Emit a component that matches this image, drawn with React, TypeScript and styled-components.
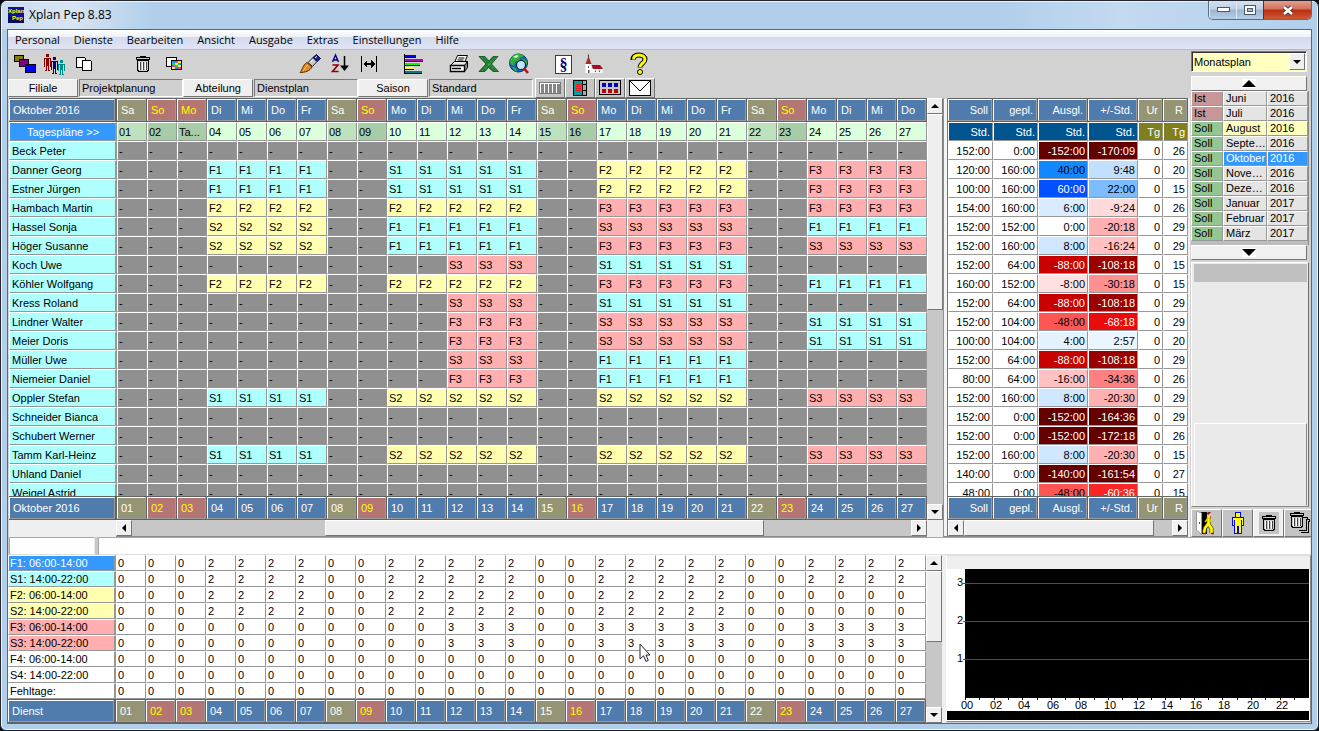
import React from "react";
import styled, { createGlobalStyle, css } from "styled-components";

const GlobalStyle = createGlobalStyle`
  * { box-sizing: border-box; }
  html, body { margin: 0; padding: 0; }
  body { background: #0b0d12; font: 11px/16px "Liberation Sans", Arial, sans-serif; color: #000; }
  button, input, select { font: inherit; color: inherit; margin: 0; border-radius: 0; }
  table { border-collapse: separate; border-spacing: 0; }
`;

const sunken = css`
  border: 1px solid;
  border-color: #7a7a7a #fff #fff #7a7a7a;
`;
const raised = css`
  border: 1px solid;
  border-color: #fff #757575 #757575 #fff;
`;

/* ---------- window ---------- */

const WindowFrame = styled.div`
  height: 100vh;
  min-height: 560px;
  display: flex;
  flex-direction: column;
  padding: 0 6px 6px;
  border: 1px solid #23242c;
  border-radius: 7px 7px 6px 6px;
  background: #b1cfeb;
  box-shadow: inset 0 0 0 1px #eef5fc;
  overflow: hidden;
`;
const TitleBar = styled.header`
  flex: none;
  height: 28px;
  display: flex;
  align-items: flex-start;
  margin: 0 -5px;
  padding: 0 5px 0 6px;
  border-top: 1px solid #eef5fc;
  background: linear-gradient(90deg, #cbdcee 0, #d8e4f2 70px, #b1cfeb 150px, #b1cfeb 1000px, #c3daf0 1120px, #b1cfeb 100%);
`;
const AppTitle = styled.h1`
  margin: 5px auto 0 5px;
  font: 12px/16px "Open Sans", sans-serif;
`;
const AppIcon = styled.svg`
  margin-top: 5px;
`;
const CaptionGroup = styled.div`
  display: flex;
  height: 19px;
  margin-top: -1px;
  border: 1px solid #5d6b7c;
  border-top: 0;
  border-radius: 0 0 5px 5px;
  overflow: hidden;
`;
const CaptionButton = styled.button<{ $close?: boolean }>`
  width: ${(p) => (p.$close ? 48 : 27)}px;
  padding: 0;
  display: flex;
  align-items: center;
  justify-content: center;
  border: 0;
  border-left: ${(p) => (p.$close ? "1px solid #5d2a2a" : "1px solid #dbe8f5")};
  background: ${(p) =>
    p.$close
      ? "linear-gradient(#e5a08f 0, #d2705a 45%, #bc2c12 50%, #cc5a35 100%)"
      : "linear-gradient(#d3e2f2 0, #bdd0e4 45%, #9db6cf 50%, #b5cfe8 100%)"};
`;
const Client = styled.div`
  flex: 1;
  min-height: 0;
  display: flex;
  flex-direction: column;
  border: 1px solid #5f6670;
  background: #d2d2d2;
  overflow: hidden;
`;
const MenuBar = styled.nav`
  flex: none;
  height: 20px;
  display: flex;
  border-bottom: 1px solid #b4bace;
  background: linear-gradient(#fff 0, #eef1f8 35%, #d4daec 38%, #e0e5f5 100%);
`;
const MenuItem = styled.button`
  height: 19px;
  padding: 0 7px;
  border: 0;
  background: none;
  font: 11px/19px "Open Sans", sans-serif;
`;

/* ---------- layout ---------- */

const Workspace = styled.div`
  flex: 1;
  min-height: 0;
  display: flex;
`;
const Planning = styled.main`
  flex: 1;
  min-width: 0;
  display: flex;
  flex-direction: column;
`;
const Toolbar = styled.div`
  flex: none;
  height: 28px;
  display: flex;
  padding-left: 2px;
`;
const ToolGroup = styled.div<{ $gap: number }>`
  display: flex;
  margin-left: ${(p) => p.$gap}px;
`;
const ToolButton = styled.button`
  width: 30px;
  height: 28px;
  padding: 0;
  border: 0;
  background: none;
  display: flex;
  align-items: center;
  justify-content: center;
`;
const SelectorRow = styled.div`
  flex: none;
  height: 20px;
  display: flex;
`;
const SelectorButton = styled.button`
  ${raised}
  width: 70px;
  padding: 0;
  margin-top: 1px;
  height: 18px;
  line-height: 16px;
  background: #efefef;
`;
const SelectorField = styled.input`
  ${sunken}
  width: 104px;
  height: 18px;
  margin: 1px 0 0 1px;
  padding: 0 2px;
  background: #d0d0d0;
`;
const ViewGroup = styled.div`
  display: flex;
  margin-left: 2px;
`;
const ViewButton = styled.button`
  ${raised}
  width: 30px;
  height: 20px;
  padding: 0;
  background: #c6c6c6;
  display: flex;
  align-items: center;
  justify-content: center;
`;
const Tables = styled.div`
  flex: 1;
  min-height: 0;
  display: flex;
`;
const Pane = styled.section<{ $width?: number; $left?: number }>`
  flex: ${(p) => (p.$width ? "none" : "1")};
  width: ${(p) => (p.$width ? `${p.$width}px` : "auto")};
  min-width: 0;
  display: flex;
  flex-direction: column;
  padding-left: ${(p) => p.$left ?? 0}px;
`;
const PaneBody = styled.div`
  flex: 1;
  min-height: 0;
  display: flex;
`;
const Clip = styled.div`
  flex: 1;
  min-width: 0;
  overflow: hidden;
  background: #efefef;
`;
const Splitter = styled.div`
  flex: none;
  width: 5px;
  border: 1px solid;
  border-color: #d2d2d2 #757575 #8a8a8a #8f8f8f;
  background: #f4f4f4;
`;
const Gutter = styled.div<{ $width: number }>`
  flex: none;
  width: ${(p) => p.$width}px;
  background: #efefef;
`;

/* ---------- scroll bars ---------- */

const BarV = styled.div`
  flex: none;
  width: 16px;
  display: flex;
  flex-direction: column;
  background: #c7c7c7;
`;
const BarH = styled.div`
  flex: 1;
  height: 17px;
  display: flex;
  background: #c7c7c7;
  border-bottom: 1px solid #8a8a8a;
`;
const BarRow = styled.div`
  flex: none;
  display: flex;
  background: #efefef;
`;
const BarButton = styled.button`
  ${raised}
  flex: none;
  width: 16px;
  height: 16px;
  padding: 0;
  background: #f0f0f0;
  display: flex;
  align-items: center;
  justify-content: center;
`;
const Track = styled.div<{ $grow: number }>`
  flex: ${(p) => p.$grow} 1 0;
`;
const Thumb = styled.div<{ $grow: number }>`
  ${raised}
  flex: ${(p) => p.$grow} 1 0;
  background: #efefef;
`;

/* ---------- tables ---------- */

const DataTable = styled.table`
  width: 100%;
  table-layout: fixed;
  line-height: 16px;
  white-space: nowrap;
  thead, tfoot { position: sticky; }
  thead { top: 0; }
  tfoot { bottom: 0; }
`;
const HeadCell = styled.th<{ $wide?: boolean }>`
  height: 24px;
  padding: 1px ${(p) => (p.$wide ? 2 : 1)}px 1px 0;
  background: #636363;
  font-weight: normal;
`;
type Tone = "work" | "sat" | "sun";
const headTone = { work: "#507bad", sat: "#959575", sun: "#b47575" };
const HeadFace = styled.div<{ $tone: Tone; $right?: boolean }>`
  height: 22px;
  padding: 0 3px;
  border: 1px solid;
  border-color: #fff #9a9a9a #9a9a9a #fff;
  background: ${(p) => headTone[p.$tone]};
  color: ${(p) => (p.$tone === "sun" ? "#ff0" : "#fff")};
  line-height: 20px;
  text-align: ${(p) => (p.$right ? "right" : "left")};
`;
const cellBox = css`
  height: 19px;
  padding: 0 1px;
  border: 1px solid;
  border-color: #fff #979797 #979797 #fff;
  overflow: hidden;
  text-align: left;
  font-weight: normal;
`;
const NameCell = styled.th<{ $lead?: boolean }>`
  ${cellBox}
  padding-left: 2px;
  border-right-width: 2px;
  background: ${(p) => (p.$lead ? "#3399ff" : "#afffff")};
  color: ${(p) => (p.$lead ? "#fff" : "#000")};
  text-align: ${(p) => (p.$lead ? "center" : "left")};
`;
const DayCell = styled.td<{ $bg: string }>`
  ${cellBox}
  background: ${(p) => p.$bg};
`;
const SumCell = styled.td<{ $bg?: string; $light?: boolean }>`
  ${cellBox}
  padding-right: 2px;
  background: ${(p) => p.$bg ?? "#fff"};
  color: ${(p) => (p.$light ? "#fff" : "#000")};
  text-align: right;
`;
const CountName = styled.th<{ $bg: string; $light?: boolean }>`
  ${cellBox}
  height: 16px;
  line-height: 14px;
  border-right-width: 2px;
  background: ${(p) => p.$bg};
  color: ${(p) => (p.$light ? "#fff" : "#000")};
`;
const CountCell = styled.td`
  ${cellBox}
  height: 16px;
  line-height: 14px;
  background: #fff;
`;

/* ---------- sidebar ---------- */

const Sidebar = styled.aside`
  flex: none;
  width: 121px;
  display: flex;
  flex-direction: column;
  padding: 1px 0 0 1px;
`;
const PlanSelect = styled.div`
  ${sunken}
  position: relative;
  height: 21px;
  margin: 0 4px 4px 0;
  box-shadow: inset 1px 1px 0 #333;
  background: #ffffc0;
  select {
    width: 100%;
    height: 19px;
    padding: 0 2px;
    border: 0;
    appearance: none;
    background: none;
  }
`;
const SelectArrow = styled.span`
  ${raised}
  position: absolute;
  top: 1px;
  right: 1px;
  width: 16px;
  height: 17px;
  background: #efefef;
  display: flex;
  align-items: center;
  justify-content: center;
  pointer-events: none;
`;
const StepButton = styled.button`
  ${raised}
  flex: none;
  height: 15px;
  margin-right: 4px;
  padding: 0;
  background: #f0f0f0;
  display: flex;
  align-items: center;
  justify-content: center;
  svg { background: #fff; }
`;
const MonthList = styled.div`
  flex: none;
  height: 154px;
  margin-right: 2px;
  overflow: hidden;
  border-right: 1px solid #8a8a8a;
  background: #bdbdbd;
`;
const MonthTable = styled.table`
  width: 100%;
  table-layout: fixed;
  white-space: nowrap;
  line-height: 13px;
`;
const MonthCell = styled.td<{ $bg: string; $light?: boolean }>`
  height: 15px;
  padding: 0 0 0 2px;
  border: 1px solid;
  border-color: #fff #979797 #979797 #fff;
  background: ${(p) => p.$bg};
  color: ${(p) => (p.$light ? "#fff" : "#000")};
  overflow: hidden;
  text-overflow: ellipsis;
`;
const InfoPanel = styled.div`
  flex: 1;
  min-height: 0;
  margin: 2px 2px 2px 0;
  padding: 1px 1px 0 2px;
  display: flex;
  flex-direction: column;
  border: 1px solid;
  border-color: #fff #6e6e6e #8a8a8a #fff;
  background: #eaeaea;
`;
const InfoHeader = styled.div`
  flex: none;
  height: 18px;
  background: #c0c0c0;
`;
const InfoUpper = styled.div`
  flex: 142 1 0;
`;
const InfoLower = styled.div`
  flex: 82 1 0;
  border: 1px solid;
  border-color: #fff #8a8a8a transparent #fff;
`;
const ActionRow = styled.div`
  flex: none;
  height: 28px;
  display: flex;
  overflow: hidden;
`;
const ActionButton = styled.button<{ $plain?: boolean }>`
  ${raised}
  flex: none;
  width: 31px;
  padding: 0;
  background: ${(p) => (p.$plain ? "#f0f0f0" : "#c3c3c3")};
  display: flex;
  align-items: center;
  justify-content: center;
`;

/* ---------- lower area ---------- */

const EntryRow = styled.div`
  flex: none;
  height: 18px;
  display: flex;
  gap: 3px;
  padding-left: 1px;
  background: #c9c9c9;
`;
const EntryInput = styled.input<{ $short?: boolean }>`
  flex: ${(p) => (p.$short ? "none" : "1")};
  width: ${(p) => (p.$short ? 86 : 200)}px;
  min-width: 0;
  height: 18px;
  padding: 0 2px;
  border: 1px solid;
  border-color: #a8a8a8 #e8e8e8 #e0e0e0 #a8a8a8;
  background: #fff;
`;
const LowerArea = styled.div`
  flex: none;
  display: flex;
`;
const ChartPanel = styled.section`
  flex: none;
  width: 365px;
  height: 167px;
  border: 1px solid;
  border-color: #dedede #8a8a8a #8a8a8a #fff;
  background: #fff;
  overflow: hidden;
  svg { display: block; }
`;
const Pointer = styled.svg`
  position: absolute;
  left: 639px;
  top: 643px;
  pointer-events: none;
`;

/* ---------- data ---------- */

const weekdays = ["Sa", "So", "Mo", "Di", "Mi", "Do", "Fr"];
const days = Array.from({ length: 27 }, (_, i) => {
  const name = weekdays[i % 7];
  const tone: Tone = name === "Sa" ? "sat" : name === "So" || i === 2 ? "sun" : "work";
  return { name, tone, label: String(i + 1).padStart(2, "0") };
});

const red = "#640000";
type Person = {
  name: string;
  weeks: [string, string, string, string];
  late?: boolean;
  sums: [string, string, string, string, number];
  tones: [string, string];
  light?: [boolean, boolean];
};
const people: Person[] = [
  { name: "Beck Peter", weeks: ["", "", "", ""], sums: ["152:00", "0:00", "-152:00", "-170:09", 26], tones: [red, red], light: [true, true] },
  { name: "Danner Georg", weeks: ["F1", "S1", "F2", "F3"], sums: ["120:00", "160:00", "40:00", "9:48", 20], tones: ["#1188ff", "#c1e0ff"] },
  { name: "Estner Jürgen", weeks: ["F1", "S1", "F2", "F3"], sums: ["100:00", "160:00", "60:00", "22:00", 15], tones: ["#0050ff", "#7dbcff"], light: [true, false] },
  { name: "Hambach Martin", weeks: ["F2", "F2", "F3", "F3"], sums: ["154:00", "160:00", "6:00", "-9:24", 26], tones: ["#d9ecff", "#ffdada"] },
  { name: "Hassel Sonja", weeks: ["S2", "F1", "S3", "F1"], sums: ["152:00", "152:00", "0:00", "-20:18", 29], tones: ["#fff", "#ffb0b0"] },
  { name: "Höger Susanne", weeks: ["S2", "F1", "F3", "S3"], sums: ["152:00", "160:00", "8:00", "-16:24", 29], tones: ["#cfe7ff", "#ffc1c1"] },
  { name: "Koch Uwe", weeks: ["", "S3", "S1", ""], late: true, sums: ["152:00", "64:00", "-88:00", "-108:18", 15], tones: ["#c80000", "#9b0000"], light: [true, true] },
  { name: "Köhler Wolfgang", weeks: ["F2", "F2", "F3", "F1"], sums: ["160:00", "152:00", "-8:00", "-30:18", 15], tones: ["#ffe0e0", "#ff9090"] },
  { name: "Kress Roland", weeks: ["", "S3", "S1", ""], late: true, sums: ["152:00", "64:00", "-88:00", "-108:18", 29], tones: ["#c80000", "#9b0000"], light: [true, true] },
  { name: "Lindner Walter", weeks: ["", "F3", "S3", "S1"], late: true, sums: ["152:00", "104:00", "-48:00", "-68:18", 29], tones: ["#ff5555", "#ea0c0c"], light: [false, true] },
  { name: "Meier Doris", weeks: ["", "F3", "S3", "S1"], late: true, sums: ["100:00", "104:00", "4:00", "2:57", 20], tones: ["#e4f2ff", "#ebf5ff"] },
  { name: "Müller Uwe", weeks: ["", "S3", "F1", ""], late: true, sums: ["152:00", "64:00", "-88:00", "-108:18", 29], tones: ["#c80000", "#9b0000"], light: [true, true] },
  { name: "Niemeier Daniel", weeks: ["", "F3", "F1", ""], late: true, sums: ["80:00", "64:00", "-16:00", "-34:36", 26], tones: ["#ffc1c1", "#ff8080"] },
  { name: "Oppler Stefan", weeks: ["S1", "S2", "S2", "S3"], sums: ["152:00", "160:00", "8:00", "-20:30", 29], tones: ["#cfe7ff", "#ffb0b0"] },
  { name: "Schneider Bianca", weeks: ["", "", "", ""], sums: ["152:00", "0:00", "-152:00", "-164:36", 29], tones: [red, red], light: [true, true] },
  { name: "Schubert Werner", weeks: ["", "", "", ""], sums: ["152:00", "0:00", "-152:00", "-172:18", 26], tones: [red, red], light: [true, true] },
  { name: "Tamm Karl-Heinz", weeks: ["S1", "S2", "S2", "S3"], sums: ["152:00", "160:00", "8:00", "-20:30", 15], tones: ["#cfe7ff", "#ffb0b0"] },
  { name: "Uhland Daniel", weeks: ["", "", "", ""], sums: ["140:00", "0:00", "-140:00", "-161:54", 27], tones: [red, red], light: [true, true] },
  { name: "Weigel Astrid", weeks: ["", "", "", ""], sums: ["48:00", "0:00", "-48:00", "-60:36", 15], tones: ["#ff5555", "#fa2525"], light: [false, true] },
];

const shiftTone: Record<string, string> = { "1": "#afffff", "2": "#ffffaf", "3": "#ffafaf" };

const shiftFor = (p: Person, i: number) => {
  if (days[i].tone !== "work") return "-";
  if (p.late && i < 11) return "-";
  return p.weeks[Math.floor(i / 7)] || "-";
};

type CountRow = { name: string; bg: string; light?: boolean; weeks: number[]; late?: boolean };
const counts: CountRow[] = [
  { name: "F1: 06:00-14:00", bg: "#3399ff", light: true, weeks: [2, 2, 2, 2] },
  { name: "S1: 14:00-22:00", bg: "#afffff", weeks: [2, 2, 2, 2] },
  { name: "F2: 06:00-14:00", bg: "#ffffaf", weeks: [2, 2, 2, 0] },
  { name: "S2: 14:00-22:00", bg: "#ffffaf", weeks: [2, 2, 2, 0] },
  { name: "F3: 06:00-14:00", bg: "#ffafaf", weeks: [0, 3, 3, 3], late: true },
  { name: "S3: 14:00-22:00", bg: "#ffafaf", weeks: [0, 3, 3, 3], late: true },
  { name: "F4: 06:00-14:00", bg: "#fff", weeks: [0, 0, 0, 0] },
  { name: "S4: 14:00-22:00", bg: "#fff", weeks: [0, 0, 0, 0] },
  { name: "Fehltage:", bg: "#fff", weeks: [0, 0, 0, 0] },
];
const countFor = (r: CountRow, i: number) =>
  days[i].tone !== "work" || (r.late && i < 11) ? 0 : r.weeks[Math.floor(i / 7)];

const months: [string, string, string][] = [
  ["Ist", "Juni", "2016"],
  ["Ist", "Juli", "2016"],
  ["Soll", "August", "2016"],
  ["Soll", "September", "2016"],
  ["Soll", "Oktober", "2016"],
  ["Soll", "November", "2016"],
  ["Soll", "Dezember", "2016"],
  ["Soll", "Januar", "2017"],
  ["Soll", "Februar", "2017"],
  ["Soll", "März", "2017"],
];
const monthTone = (m: string) => (m === "August" ? "#ffffc0" : m === "Oktober" ? "#3399ff" : "#e4e4e4");

/* ---------- icons ---------- */

const Arrow = ({ dir }: { dir: "up" | "down" | "left" | "right" }) => {
  const d = { up: "M4 2 8 6H0z", down: "M0 2H8L4 6z", left: "M2 4 6 0V8z", right: "M6 4 2 0V8z" }[dir];
  return (
    <svg width="8" height="8" viewBox="0 0 8 8" aria-hidden="true">
      <path d={d} fill="#000" />
    </svg>
  );
};

const BigArrow = ({ up }: { up?: boolean }) => (
  <svg width="14" height="9" viewBox="0 0 14 9" aria-hidden="true">
    <path d={up ? "M7 1 14 8H0z" : "M0 1H14L7 8z"} fill="#000" />
  </svg>
);

const Svg = ({ w = 24, h = 24, children }: { w?: number; h?: number; children: React.ReactNode }) => (
  <svg width={w} height={h} viewBox={`0 0 ${w} ${h}`} shapeRendering="crispEdges" aria-hidden="true">
    {children}
  </svg>
);

const figure = (x: number, y: number, s: number, c: string) => (
  <g fill={c} transform={`translate(${x} ${y})`}>
    <rect x="2" y="0" width="3" height="3" />
    <rect x="0" y="4" width="7" height="1" />
    <rect x="0" y="4" width="1" height={s - 8} />
    <rect x="6" y="4" width="1" height={s - 8} />
    <rect x="2" y="4" width="3" height={s - 9} />
    <rect x="2" y={s - 7} width="1" height="7" />
    <rect x="4" y={s - 7} width="1" height="7" />
    <rect x="1" y={s - 1} width="2" height="1" />
    <rect x="4" y={s - 1} width="2" height="1" />
  </g>
);

const trash = (
  <>
    <path d="M7.500 4.500V3.500H12.500V4.500" fill="none" stroke="#000" />
    <path d="M4.500 7.500V17.500H5.500V18.500H14.500V17.500H15.500V7.500z" fill="#c9c9c9" stroke="#000" />
    <rect x="3.500" y="4.500" width="13" height="2" fill="#c9c9c9" stroke="#000" />
    <path d="M7.500 9V17M10.500 9V17M13.500 9V17" stroke="#444" />
    <path d="M6.500 9V17M9.500 9V17M12.500 9V17" stroke="#fff" />
  </>
);

const icons = {
  branches: (
    <Svg>
      <rect x="1.500" y="3.500" width="9" height="6" fill="#808000" stroke="#000" />
      <rect x="6.500" y="7.500" width="9" height="7" fill="#800080" stroke="#000" />
      <rect x="12.500" y="12.500" width="10" height="8" fill="#00f" stroke="#000" />
    </Svg>
  ),
  staff: (
    <Svg>
      {figure(1, 2, 17, "#8b0000")}
      {figure(8, 5, 17, "#00008b")}
      {figure(15, 8, 15, "#008b8b")}
    </Svg>
  ),
  copy: (
    <Svg>
      <path d="M3.500 5.500H11.500L12.500 6.500V15.500H3.500z" fill="#fff" stroke="#000" />
      <path d="M9.500 8.500H17.500L18.500 9.500V18.500H9.500z" fill="#fff" stroke="#000" />
    </Svg>
  ),
  trash: <Svg w={24} h={22}>{trash}</Svg>,
  pattern: (
    <Svg>
      <path d="M3.500 5.500H13.500V14.500H3.500z" fill="#fff" stroke="#000" />
      <rect x="8.500" y="8.500" width="10" height="9" fill="#ff0" stroke="#000" />
      <path d="M9 9h3v2h-3zM15 11h3v2h-3zM12 15h3v2h-3z" fill="#00a0ff" />
      <path d="M12 9h3v2h-3zM9 13h3v2h-3zM15 15h3v2h-3z" fill="#ff30c0" />
      <path d="M9 11h3v2h-3zM12 13h3v2h-3z" fill="#20d060" />
    </Svg>
  ),
  brush: (
    <svg width="24" height="24" viewBox="0 0 24 24" aria-hidden="true">
      <path d="M2 20.500C4.500 18 4.500 13 9 10.500L14 15C12 19 7 20.500 2 20.500z" fill="#e08a20" stroke="#5a2c00" />
      <path d="M5 19C7 17 8 14 10 13" stroke="#ffd080" fill="none" />
      <path d="M10 10.500 15 5.500 19 9.500 14.500 14.500z" fill="#c8c8c8" stroke="#222" />
      <path d="M15 5.500 18.500 2.500 22.500 6.500 19 9.500z" fill="#1020a0" stroke="#000040" />
      <path d="M17 6 19 4.300M12 10.500 15 7.500" stroke="#fff" />
    </svg>
  ),
  sort: (
    <svg width="24" height="24" viewBox="0 0 24 24" aria-hidden="true">
      <path d="M4.500 10 7.500 3 10.500 10M5.500 8H9.500" fill="none" stroke="#000080" strokeWidth="1.400" />
      <path d="M4.500 13H10L4.500 19.500H10.500" fill="none" stroke="#900000" strokeWidth="1.600" />
      <path d="M16.500 4V17" stroke="#000" strokeWidth="1.500" />
      <path d="M12 13.500H21L16.500 19z" />
    </svg>
  ),
  width: (
    <Svg>
      <path d="M3.500 4V20M18.500 4V20" stroke="#000" fill="none" />
      <path d="M5 12 9 8V16zM17 12 13 8V16z" />
      <path d="M6 12H16" stroke="#000" strokeWidth="2" />
    </Svg>
  ),
  bars: (
    <Svg>
      <path d="M2.500 2V22" stroke="#000" />
      <rect x="3" y="3" width="11" height="2" fill="#00f" />
      <rect x="3" y="7" width="18" height="2" fill="#c000c0" />
      <rect x="3" y="11" width="15" height="2" fill="#0f0" />
      <rect x="3" y="15" width="9" height="2" fill="#ff0" />
      <rect x="3" y="19" width="17" height="2" fill="#008080" />
      <path d="M3 5.500H14M3 9.500H21M3 13.500H18M3 17.500H12M3 21.500H20" stroke="#000" />
    </Svg>
  ),
  print: (
    <svg width="24" height="24" viewBox="0 0 24 24" aria-hidden="true">
      <path d="M7.500 10.500 10.500 3.500H20.500L17.500 10.500z" fill="#fff" stroke="#000" />
      <path d="M11.500 6H17.500M10.500 8H16.500" stroke="#000" />
      <path d="M3.500 13.500 7.500 9.500H20.500L18.500 13.500z" fill="#e8e8e8" stroke="#000" />
      <path d="M3.500 13.500H17.500V19.500H3.500z" fill="#fff" stroke="#000" strokeWidth="1.400" />
      <path d="M17.500 13.500 20.500 9.500V15.500L17.500 19.500z" fill="#888" stroke="#000" />
      <path d="M5 16.500H14" stroke="#000" strokeWidth="1.500" />
    </svg>
  ),
  excel: (
    <svg width="24" height="24" viewBox="0 0 24 24" aria-hidden="true">
      <path d="M2 4.500H8L12 9 16 4.500H21L14.500 12 21.500 19.500H16L11.500 15.500 8 19.500H2L9 12z" fill="#1c7a2c" stroke="#0c4a18" strokeWidth=".800" />
      <path d="M4 5 18 19M7 5 20 19M18 5 5 19M20 5 8 17" stroke="#6fb77a" strokeWidth=".700" strokeDasharray="1 1" />
    </svg>
  ),
  globe: (
    <svg width="24" height="24" viewBox="0 0 24 24" aria-hidden="true">
      <circle cx="11.500" cy="11" r="9" fill="#1060c0" stroke="#003060" />
      <path d="M5 5C8 1 14 1 17 4L13 6 12 9 8 10 7 14 3 12C2 9 3 7 5 5z" fill="#2fae3a" />
      <path d="M6 5C8 3 11 3 12 4L9 6z" fill="#c8ffc8" />
      <path d="M15 6 20 9V13L17 11zM5 15 9 16 10 20C8 19 6 18 5 15z" fill="#2fae3a" />
      <circle cx="14" cy="13" r="4.500" fill="#bfe6ff" stroke="#123" strokeWidth="1.200" />
      <path d="M17 16.500 21 21" stroke="#c01010" strokeWidth="2.600" />
    </svg>
  ),
  law: (
    <svg width="24" height="24" viewBox="0 0 24 24" aria-hidden="true">
      <rect x="3.500" y="3.500" width="16" height="18" fill="#fff" stroke="#006400" />
      <text x="11.500" y="17.500" textAnchor="middle" fontFamily="Liberation Serif" fontWeight="bold" fontSize="16" fill="#000080">§</text>
    </svg>
  ),
  church: (
    <svg width="24" height="24" viewBox="0 0 24 24" aria-hidden="true">
      <path d="M6.500 2.500V5" stroke="#333" />
      <path d="M6.500 4 9.500 12H3.500z" fill="#a03020" />
      <path d="M3.500 12H9.500V21H3.500z" fill="#fff" />
      <path d="M9.500 13H18L21 17H11z" fill="#a80c20" />
      <path d="M9.500 16.500 11 17H21V21H9.500z" fill="#f4f4f4" />
      <path d="M6 14H7V16H6zM6 18H7.500V21H6zM13 18.500H14V20H13zM17 18.500H18V20H17z" fill="#555" />
    </svg>
  ),
  help: (
    <svg width="24" height="24" viewBox="0 0 24 24" aria-hidden="true">
      <path d="M6 8C6 4.500 8.500 3 12 3C15.500 3 18 5 18 7.500C18 11 13 11.500 13 15.500" fill="none" stroke="#000" strokeWidth="5" />
      <path d="M6.500 7.500C6.500 4.500 8.500 3 12 3C15.500 3 18 5 18 7.500C18 11 13 11.500 13 15" fill="none" stroke="#ff0" strokeWidth="3" />
      <circle cx="13" cy="20" r="2.500" fill="#ff0" stroke="#000" />
    </svg>
  ),
  columns: (
    <Svg w={24} h={14}>
      <rect x="1.500" y="1.500" width="21" height="11" fill="#fff" stroke="#777" />
      <path d="M3 3h3v9h-3zM7 3h3v9h-3zM11 3h3v9h-3zM15 3h3v9h-3zM19 3h3v9h-3z" fill="#858585" />
    </Svg>
  ),
  book: (
    <Svg w={18} h={16}>
      <rect x="2.500" y=".500" width="9" height="15" fill="#00a0a0" stroke="#000" />
      <path d="M5 4.500H10M5 6.500H10M5 8.500H10M5 10.500H10" stroke="#e02020" />
      <rect x="11.500" y=".500" width="4" height="15" fill="#a8a8a8" stroke="#000" />
      <path d="M12 4.500H15M12 10.500H15" stroke="#000" />
    </Svg>
  ),
  blocks: (
    <Svg w={24} h={16}>
      <rect x="1.500" y=".500" width="21" height="14" fill="#c8c8c8" stroke="#000" />
      <path d="M4 3h4v4h-4zM10 3h4v4h-4zM16 3h4v4h-4z" fill="#0000c0" />
      <path d="M4 9h4v4h-4zM10 9h4v4h-4zM16 9h4v4h-4z" fill="#c00000" />
    </Svg>
  ),
  mail: (
    <svg width="24" height="17" viewBox="0 0 24 17" aria-hidden="true">
      <rect x="1.500" y=".500" width="21" height="15" fill="#fff" stroke="#000" />
      <path d="M1.500 .500 12 11 22.500 .500" fill="none" stroke="#000" />
    </svg>
  ),
  exit: (
    <svg width="22" height="24" viewBox="0 0 22 24" aria-hidden="true">
      <path d="M5 1H11V23H5z" fill="#000" />
      <path d="M.500 .500H1.500L5.500 2V23.500L.500 19z" fill="#fff" stroke="#999" />
      <path d="M3.500 11V13" stroke="#555" />
      <path d="M12.500 5V13M12.500 13 15.500 17.500V22M12 13 9 17 8 22" fill="none" stroke="#5a3a00" strokeWidth="4" />
      <path d="M12.500 4V13M12.500 13 15.500 17.500V22M12 13 9 17 8 22" fill="none" stroke="#ff0" strokeWidth="2.600" />
      <path d="M12 7 9 11M13 7 15 10.500H18" fill="none" stroke="#e8c000" strokeWidth="1.500" />
      <circle cx="13" cy="3.500" r="2" fill="#ffc090" />
      <path d="M11 3C11 1 13 .500 15 1.500L12 4z" fill="#902020" />
      <path d="M7 22.500H10M15 22.500H18" stroke="#c00000" strokeWidth="1.500" />
    </svg>
  ),
  person: (
    <Svg w={22} h={24}>
      <path d="M8.500 1.500H13.500V6.500H16.500V14.500H14.500V22.500H11.500V15.500H10.500V22.500H7.500V14.500H5.500V6.500H8.500z" fill="#ff0" stroke="#00f" />
      <path d="M7.500 9V15M14.500 9V15M8.500 6.500H13.500" stroke="#00f" />
    </Svg>
  ),
  bin: (
    <Svg w={20} h={22}>
      <rect width="20" height="22" fill="#c3c3c3" />
      {trash}
    </Svg>
  ),
  bins: (
    <Svg w={22} h={24}>
      <path d="M9.500 8.500H20.500V10.500H19.500V21.500H11.500" fill="#c3c3c3" stroke="#000" />
      <path d="M7.500 6.500H18.500V8.500H17.500V19.500H9.500" fill="#c3c3c3" stroke="#000" />
      <g transform="translate(-2 -2)">{trash}</g>
    </Svg>
  ),
};

const tools: { gap: number; items: [keyof typeof icons, string][] }[] = [
  { gap: 0, items: [["branches", "Filialen"], ["staff", "Personal"], ["copy", "Kopieren"]] },
  { gap: 30, items: [["trash", "Löschen"], ["pattern", "Muster kopieren"]] },
  { gap: 105, items: [["brush", "Farben"], ["sort", "Sortieren"], ["width", "Spaltenbreite"]] },
  { gap: 14, items: [["bars", "Balkenplan"]] },
  { gap: 15, items: [["print", "Drucken"], ["excel", "Excel"], ["globe", "Web"]] },
  { gap: 15, items: [["law", "Regeln"], ["church", "Feiertage"]] },
  { gap: 15, items: [["help", "Hilfe"]] },
];

/* ---------- parts ---------- */

const ScrollV = ({ before, thumb, after }: { before: number; thumb: number; after: number }) => (
  <BarV>
    <BarButton aria-label="Nach oben"><Arrow dir="up" /></BarButton>
    <Track $grow={before} />
    <Thumb $grow={thumb} />
    <Track $grow={after} />
    <BarButton aria-label="Nach unten"><Arrow dir="down" /></BarButton>
  </BarV>
);

const ScrollH = ({ before, thumb, after }: { before: number; thumb: number; after: number }) => (
  <BarH>
    <BarButton aria-label="Nach links"><Arrow dir="left" /></BarButton>
    <Track $grow={before} />
    <Thumb $grow={thumb} />
    <Track $grow={after} />
    <BarButton aria-label="Nach rechts"><Arrow dir="right" /></BarButton>
  </BarH>
);

const DayHead = ({ title, names }: { title: string; names?: boolean }) => (
  <tr>
    <HeadCell $wide><HeadFace $tone="work">{title}</HeadFace></HeadCell>
    {days.map((d) => (
      <HeadCell key={d.label}><HeadFace $tone={d.tone}>{names ? d.name : d.label}</HeadFace></HeadCell>
    ))}
  </tr>
);

const NameCol = styled.col`
  width: 108px;
`;
const DayCols = () => (
  <colgroup>
    <NameCol />
    {days.map((d) => <col key={d.label} />)}
  </colgroup>
);

const dateTone = { work: "#dcffdc", sat: "#bde0bd", sun: "#a8cca8" };

const Schedule = () => (
  <DataTable>
    <DayCols />
    <thead><DayHead title="Oktober 2016" names /></thead>
    <tbody>
      <tr>
        <NameCell scope="row" $lead>Tagespläne &gt;&gt;</NameCell>
        {days.map((d, i) => (
          <DayCell key={d.label} $bg={dateTone[d.tone]}>{i === 2 ? "Ta..." : d.label}</DayCell>
        ))}
      </tr>
      {people.map((p) => (
        <tr key={p.name}>
          <NameCell scope="row">{p.name}</NameCell>
          {days.map((d, i) => {
            const shift = shiftFor(p, i);
            return <DayCell key={d.label} $bg={shiftTone[shift[1]] ?? "#909090"}>{shift}</DayCell>;
          })}
        </tr>
      ))}
    </tbody>
    <tfoot><DayHead title="Oktober 2016" /></tfoot>
  </DataTable>
);

const SumCol = styled.col<{ $w: number }>`
  width: ${(p) => p.$w}px;
`;
const sumHeads: [string, Tone, number][] = [
  ["Soll", "work", 45], ["gepl.", "work", 45], ["Ausgl.", "work", 50],
  ["+/-Std.", "work", 50], ["Ur", "sat", 25], ["R", "sat", 25],
];
const SumHead = () => (
  <tr>
    {sumHeads.map(([label, tone]) => (
      <HeadCell key={label}><HeadFace $tone={tone} $right>{label}</HeadFace></HeadCell>
    ))}
  </tr>
);

const Sums = () => (
  <DataTable>
    <colgroup>{sumHeads.map(([label, , w]) => <SumCol key={label} $w={w} />)}</colgroup>
    <thead><SumHead /></thead>
    <tbody>
      <tr>
        {["Std.", "Std.", "Std.", "Std.", "Tg", "Tg"].map((u, i) => (
          <SumCell key={i} $bg={i < 4 ? "#00548f" : "#7f7f1f"} $light>{u}</SumCell>
        ))}
      </tr>
      {people.map((p) => (
        <tr key={p.name}>
          <SumCell>{p.sums[0]}</SumCell>
          <SumCell>{p.sums[1]}</SumCell>
          <SumCell $bg={p.tones[0]} $light={p.light?.[0]}>{p.sums[2]}</SumCell>
          <SumCell $bg={p.tones[1]} $light={p.light?.[1]}>{p.sums[3]}</SumCell>
          <SumCell>0</SumCell>
          <SumCell>{p.sums[4]}</SumCell>
        </tr>
      ))}
    </tbody>
    <tfoot><SumHead /></tfoot>
  </DataTable>
);

const Counts = () => (
  <DataTable>
    <DayCols />
    <tbody>
      {counts.map((r) => (
        <tr key={r.name}>
          <CountName scope="row" $bg={r.bg} $light={r.light}>{r.name}</CountName>
          {days.map((d, i) => <CountCell key={d.label}>{countFor(r, i)}</CountCell>)}
        </tr>
      ))}
    </tbody>
    <tfoot><DayHead title="Dienst" /></tfoot>
  </DataTable>
);

const Chart = () => (
  <svg width="363" height="165" viewBox="0 0 363 165" role="img" aria-label="Tagesverlauf">
    <rect width="363" height="13" fill="#efefef" />
    <rect x="18" y="13" width="344" height="129" fill="#000" />
    <rect y="155" width="362" height="9" fill="#000" />
    {[3, 2, 1].map((n, i) => (
      <g key={n}>
        <path d={`M16 ${27.5 + i * 38}H362`} stroke="#4c4c4c" />
        <text x="10" y={30 + i * 38} fontSize="11" textAnchor="start">{n}</text>
      </g>
    ))}
    {Array.from({ length: 24 }, (_, h) => (
      <path key={h} d={`M${18.5 + Math.round(h * 14.3)} 141V144`} stroke="#000" />
    ))}
    {Array.from({ length: 12 }, (_, i) => (
      <text key={i} x={20 + Math.round(i * 28.6)} y="153" fontSize="11" textAnchor="middle">
        {String(i * 2).padStart(2, "0")}
      </text>
    ))}
  </svg>
);

const KindCol = styled.col`
  width: 32px;
`;
const MonthCol = styled.col`
  width: 44px;
`;

const selectors: [string, string][] = [
  ["Filiale", "Projektplanung"],
  ["Abteilung", "Dienstplan"],
  ["Saison", "Standard"],
];

export default function App() {
  return (
    <>
      <GlobalStyle />
      <WindowFrame>
        <TitleBar>
          <AppIcon width="16" height="16" viewBox="0 0 16 16" aria-hidden="true">
            <rect width="16" height="16" fill="#10109a" />
            <rect y="10" width="16" height="6" fill="#0a0a60" />
            <text x="0" y="6" fontFamily="Liberation Sans" fontWeight="bold" fontSize="6" fill="#ff0">Xplan</text>
            <text x="4" y="13" fontFamily="Liberation Sans" fontWeight="bold" fontSize="6" fill="#ff0">Pep</text>
          </AppIcon>
          <AppTitle>Xplan Pep 8.83</AppTitle>
          <CaptionGroup>
            <CaptionButton aria-label="Minimieren">
              <svg width="13" height="6"><rect x=".5" y=".5" width="12" height="4" fill="#fff" stroke="#4d5866" /></svg>
            </CaptionButton>
            <CaptionButton aria-label="Maximieren">
              <svg width="12" height="10">
                <rect x=".5" y=".5" width="11" height="9" fill="#fff" stroke="#4d5866" />
                <rect x="3.5" y="3.5" width="5" height="3" fill="#a9c0d8" stroke="#4d5866" />
              </svg>
            </CaptionButton>
            <CaptionButton $close aria-label="Schließen">
              <svg width="14" height="11">
                <path d="M3 2 11 9M11 2 3 9" stroke="#5b3535" strokeWidth="4.600" />
                <path d="M3 2 11 9M11 2 3 9" stroke="#fff" strokeWidth="2.600" />
              </svg>
            </CaptionButton>
          </CaptionGroup>
        </TitleBar>
        <Client>
          <MenuBar>
            {["Personal", "Dienste", "Bearbeiten", "Ansicht", "Ausgabe", "Extras", "Einstellungen", "Hilfe"].map((m) => (
              <MenuItem key={m}>{m}</MenuItem>
            ))}
          </MenuBar>
          <Workspace>
            <Planning>
              <Toolbar>
                {tools.map((g, i) => (
                  <ToolGroup key={i} $gap={g.gap}>
                    {g.items.map(([icon, label]) => (
                      <ToolButton key={icon} aria-label={label}>{icons[icon]}</ToolButton>
                    ))}
                  </ToolGroup>
                ))}
              </Toolbar>
              <SelectorRow>
                {selectors.map(([label, value]) => (
                  <React.Fragment key={label}>
                    <SelectorButton>{label}</SelectorButton>
                    <SelectorField readOnly aria-label={label} value={value} />
                  </React.Fragment>
                ))}
                <ViewGroup>
                  <ViewButton aria-label="Spalten">{icons.columns}</ViewButton>
                  <ViewButton aria-label="Planbuch">{icons.book}</ViewButton>
                  <ViewButton aria-label="Blöcke">{icons.blocks}</ViewButton>
                  <ViewButton aria-label="Nachricht">{icons.mail}</ViewButton>
                </ViewGroup>
              </SelectorRow>
              <Tables>
                <Pane $left={1}>
                  <PaneBody>
                    <Clip><Schedule /></Clip>
                    <ScrollV before={0} thumb={195} after={196} />
                  </PaneBody>
                  <BarRow>
                    <Gutter $width={107} />
                    <ScrollH before={193} thumb={438} after={147} />
                    <Gutter $width={16} />
                  </BarRow>
                </Pane>
                <Splitter />
                <Pane $width={240}>
                  <PaneBody>
                    <Clip><Sums /></Clip>
                  </PaneBody>
                  <BarRow>
                    <ScrollH before={0} thumb={190} after={18} />
                  </BarRow>
                </Pane>
                <Gutter $width={2} />
              </Tables>
            </Planning>
            <Sidebar>
              <PlanSelect>
                <select aria-label="Planansicht" defaultValue="Monatsplan">
                  <option>Monatsplan</option>
                </select>
                <SelectArrow><Arrow dir="down" /></SelectArrow>
              </PlanSelect>
              <StepButton aria-label="Frühere Monate"><BigArrow up /></StepButton>
              <MonthList>
                <MonthTable>
                  <colgroup>
                    <KindCol />
                    <MonthCol />
                    <col />
                  </colgroup>
                  <tbody>
                    {months.map(([kind, name, year]) => (
                      <tr key={name}>
                        <MonthCell $bg={kind === "Ist" ? "#c89696" : "#94c694"}>{kind}</MonthCell>
                        <MonthCell $bg={monthTone(name)} $light={name === "Oktober"}>{name}</MonthCell>
                        <MonthCell $bg={monthTone(name)} $light={name === "Oktober"}>{year}</MonthCell>
                      </tr>
                    ))}
                  </tbody>
                </MonthTable>
              </MonthList>
              <StepButton aria-label="Spätere Monate"><BigArrow /></StepButton>
              <InfoPanel>
                <InfoHeader />
                <InfoUpper />
                <InfoLower />
              </InfoPanel>
              <ActionRow>
                <ActionButton aria-label="Beenden">{icons.exit}</ActionButton>
                <ActionButton aria-label="Mitarbeiter">{icons.person}</ActionButton>
                <ActionButton $plain aria-label="Eintrag löschen">{icons.bin}</ActionButton>
                <ActionButton aria-label="Alle löschen">{icons.bins}</ActionButton>
              </ActionRow>
            </Sidebar>
          </Workspace>
          <EntryRow>
            <EntryInput $short aria-label="Kürzel" />
            <EntryInput aria-label="Bemerkung" />
          </EntryRow>
          <LowerArea>
            <Pane>
              <PaneBody>
                <Clip><Counts /></Clip>
                <ScrollV before={0} thumb={70} after={65} />
                <Gutter $width={4} />
              </PaneBody>
            </Pane>
            <ChartPanel><Chart /></ChartPanel>
          </LowerArea>
        </Client>
      </WindowFrame>
      <Pointer width="12" height="20" viewBox="0 0 12 20" aria-hidden="true">
        <path d="M1 1V16L4.500 12.800 7 18.500 9.300 17.400 7 12H11z" fill="#fff" stroke="#223" />
      </Pointer>
    </>
  );
}
